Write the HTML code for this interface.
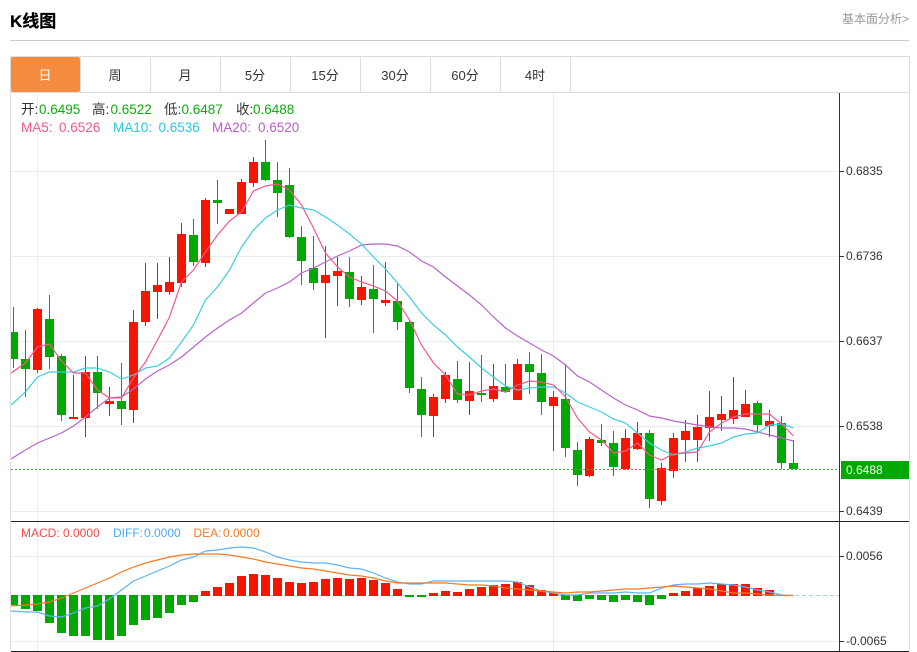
<!DOCTYPE html>
<html><head><meta charset="utf-8"><style>
html,body{margin:0;padding:0;background:#fff}
svg{display:block}
text{font-family:"Liberation Sans","Noto Sans CJK SC",sans-serif}
</style></head><body>
<svg width="917" height="652" viewBox="0 0 917 652" xmlns="http://www.w3.org/2000/svg">
<defs><clipPath id="c"><rect x="11" y="93" width="828" height="558"/></clipPath></defs>
<rect width="917" height="652" fill="#fff"/>
<text x="10" y="27" font-size="17" font-weight="bold" stroke="#000" stroke-width=".25" fill="#000">K线图</text>
<text x="842" y="23" font-size="12" fill="#999">基本面分析&gt;</text>
<path d="M10 40.5H909" stroke="#ccc" fill="none"/>
<path d="M10 56.5H909.5V651M10.5 56.5V651M10 92.5H909" stroke="#ddd" fill="none"/>
<path d="M80.5 57V92M150.5 57V92M220.5 57V92M290.5 57V92M360.5 57V92M430.5 57V92M500.5 57V92M570.5 57V92" stroke="#ddd" fill="none"/>
<path d="M13 57H78a2 2 0 0 1 2 2V90a2 2 0 0 1-2 2H13a2 2 0 0 1-2-2V59a2 2 0 0 1 2-2z" fill="#f58b3e"/>
<g font-size="13" text-anchor="middle" fill="#333">
<text x="45" y="80" fill="#fff">日</text><text x="115" y="80">周</text><text x="185" y="80">月</text><text x="255" y="80">5分</text><text x="325" y="80">15分</text><text x="395" y="80">30分</text><text x="465" y="80">60分</text><text x="535" y="80">4时</text>
</g>
<path d="M11 171.5H839M11 256.5H839M11 341.5H839M11 426.5H839M11 511.5H839M11 556.5H839M11 641.5H839M37.5 93V651M553.5 93V651" stroke="#e6edf3" fill="none"/>
<g clip-path="url(#c)">
<path d="M13.5 307V368M25.5 330V397M49.5 295V369M61.5 354V421M97.5 356V409M121.5 363V425M193.5 219V266M217.5 180V224M265.5 140V181M277.5 162V217M289.5 168V238M301.5 226V285M313.5 236V290M349.5 257V307M373.5 265V333M397.5 283V330M409.5 321V393M421.5 377V437M457.5 361V403M481.5 355V402M505.5 364V393M529.5 352V394M541.5 354V415M565.5 364V457M577.5 442V486M601.5 424V446M613.5 431V476M649.5 430V508M757.5 401V433M781.5 416V469M793.5 440V469" stroke="#0a9f0a" fill="none"/>
<path d="M37.5 308V373M73.5 375V419M85.5 356V437M109.5 387V416M133.5 310V423M145.5 263V326M157.5 263V319M169.5 257V295M181.5 223V287M205.5 198V267M241.5 179V214M253.5 157V187M325.5 246V338M337.5 257V306M361.5 276V305M385.5 262V306M433.5 394V437M445.5 372V403M469.5 362V415M493.5 364V402M517.5 359V400M553.5 391V451M589.5 437V477M625.5 429V470M637.5 422V450M661.5 463V505M673.5 433V478M685.5 420V462M697.5 415V462M709.5 391V441M721.5 396V431M733.5 377V424M745.5 390V417M769.5 410V437" stroke="#e8150a" fill="none"/>
<path d="M9 332h9v27h-9zM21 359h9v10h-9zM45 319h9v38h-9zM57 356h9v59h-9zM93 372h9v21h-9zM117 401h9v8h-9zM189 235h9v27h-9zM213 200h9v3h-9zM261 162h9v18h-9zM273 180h9v13h-9zM285 185h9v52h-9zM297 237h9v24h-9zM309 268h9v15h-9zM345 272h9v27h-9zM369 289h9v10h-9zM393 301h9v21h-9zM405 322h9v66h-9zM417 389h9v26h-9zM453 379h9v21h-9zM477 393h9v2h-9zM501 387h9v5h-9zM525 364h9v8h-9zM537 373h9v29h-9zM561 399h9v49h-9zM573 450h9v25h-9zM597 440h9v3h-9zM609 443h9v24h-9zM645 433h9v66h-9zM753 403h9v22h-9zM777 423h9v40h-9zM789 463h9v6h-9z" fill="#02a802"/>
<path d="M33 309h9v61h-9zM69 417h9v2h-9zM81 372h9v46h-9zM105 401h9v3h-9zM129 322h9v88h-9zM141 291h9v31h-9zM153 285h9v7h-9zM165 282h9v10h-9zM177 234h9v49h-9zM201 200h9v63h-9zM225 209h9v5h-9zM237 182h9v32h-9zM249 162h9v21h-9zM321 275h9v8h-9zM333 271h9v5h-9zM357 287h9v13h-9zM381 300h9v3h-9zM429 397h9v19h-9zM441 375h9v24h-9zM465 391h9v10h-9zM489 386h9v13h-9zM513 364h9v36h-9zM549 397h9v9h-9zM585 439h9v37h-9zM621 438h9v31h-9zM633 433h9v16h-9zM657 468h9v33h-9zM669 438h9v33h-9zM681 431h9v9h-9zM693 427h9v13h-9zM705 417h9v11h-9zM717 414h9v6h-9zM729 410h9v9h-9zM741 404h9v13h-9zM765 421h9v5h-9z" fill="#f51600"/>
<polyline fill="none" stroke="#b665c9" stroke-width="1.2" points="11,459 25.5,450 37.5,443 49.5,438 61.5,433 73.5,426 85.5,417 97.5,407 109.5,398 121.5,397 133.5,389 145.5,379 157.5,371 169.5,365 181.5,357 193.5,347 205.5,337 217.5,328 229.5,320 241.5,313 253.5,303 265.5,293 277.5,288 289.5,282 301.5,273 313.5,268 325.5,262 337.5,256 349.5,251 361.5,245 373.5,244 385.5,244 397.5,246 409.5,252 421.5,261 433.5,267 445.5,277 457.5,286 469.5,295 481.5,305 493.5,317 505.5,328 517.5,336 529.5,343 541.5,350 553.5,356 565.5,365 577.5,376 589.5,382 601.5,390 613.5,398 625.5,405 637.5,410 649.5,416 661.5,418 673.5,421 685.5,423 697.5,425 709.5,427 721.5,428 733.5,428 745.5,429 757.5,432 769.5,435 781.5,438 793.5,441"/>
<polyline fill="none" stroke="#3ecfe0" stroke-width="1.2" points="11,405 25.5,392 37.5,377 49.5,372 61.5,372 73.5,372 85.5,368 97.5,368 109.5,372 121.5,379 133.5,375 145.5,368 157.5,366 169.5,358 181.5,342 193.5,325 205.5,300 217.5,287 229.5,270 241.5,247 253.5,230 265.5,218 277.5,210 289.5,205 301.5,208 313.5,210 325.5,217 337.5,225 349.5,234 361.5,244 373.5,257 385.5,269 397.5,283 409.5,297 421.5,313 433.5,325 445.5,335 457.5,347 469.5,357 481.5,368 493.5,377 505.5,386 517.5,390 529.5,388 541.5,387 553.5,387 565.5,393 577.5,402 589.5,407 601.5,412 613.5,419 625.5,423 637.5,433 649.5,443 661.5,450 673.5,455 685.5,452 697.5,448 709.5,446 721.5,443 733.5,437 745.5,434 757.5,433 769.5,425 781.5,424 793.5,428"/>
<polyline fill="none" stroke="#f5588a" stroke-width="1.2" points="11,373 25.5,363 37.5,347 49.5,344 61.5,361 73.5,373 85.5,373 97.5,390 109.5,398 121.5,398 133.5,378 145.5,362 157.5,340 169.5,317 181.5,282 193.5,270 205.5,252 217.5,235 229.5,221 241.5,212 253.5,191 265.5,186 277.5,184 289.5,190 301.5,205 313.5,228 325.5,253 337.5,267 349.5,277 361.5,282 373.5,286 385.5,291 397.5,301 409.5,320 421.5,345 433.5,363 445.5,375 457.5,394 469.5,395 481.5,391 493.5,389 505.5,392 517.5,385 529.5,381 541.5,382 553.5,385 565.5,397 577.5,418 589.5,432 601.5,440 613.5,453 625.5,451 637.5,443 649.5,455 661.5,460 673.5,454 685.5,453 697.5,452 709.5,432 721.5,423 733.5,417 745.5,414 757.5,414 769.5,414 781.5,424 793.5,436"/>
<path d="M11 469.5H839" stroke="#3cb43c" stroke-dasharray="2 2" fill="none"/>
<path d="M11 595.5H839" stroke="#9fd3e8" stroke-dasharray="4 3" fill="none"/>
<path d="M9 595h9v10h-9zM21 595h9v14h-9zM33 595h9v16h-9zM45 595h9v28h-9zM57 595h9v38h-9zM69 595h9v41h-9zM81 595h9v41h-9zM93 595h9v45h-9zM105 595h9v45h-9zM117 595h9v41h-9zM129 595h9v30h-9zM141 595h9v25h-9zM153 595h9v23h-9zM165 595h9v18h-9zM177 595h9v10h-9zM189 595h9v7h-9zM405 595h9v2h-9zM417 595h9v2h-9zM561 595h9v5h-9zM573 595h9v6h-9zM585 595h9v4h-9zM597 595h9v5h-9zM609 595h9v7h-9zM621 595h9v5h-9zM633 595h9v7h-9zM645 595h9v10h-9zM657 595h9v4h-9z" fill="#02a802"/>
<path d="M201 591h9v5h-9zM213 587h9v9h-9zM225 583h9v13h-9zM237 576h9v20h-9zM249 574h9v22h-9zM261 575h9v21h-9zM273 578h9v18h-9zM285 582h9v14h-9zM297 583h9v13h-9zM309 582h9v14h-9zM321 579h9v17h-9zM333 578h9v18h-9zM345 579h9v17h-9zM357 578h9v18h-9zM369 580h9v16h-9zM381 583h9v13h-9zM393 589h9v7h-9zM429 593h9v3h-9zM441 591h9v5h-9zM453 592h9v4h-9zM465 589h9v7h-9zM477 587h9v9h-9zM489 585h9v11h-9zM501 584h9v12h-9zM513 582h9v14h-9zM525 585h9v11h-9zM537 590h9v6h-9zM549 593h9v3h-9zM669 593h9v3h-9zM681 591h9v5h-9zM693 588h9v8h-9zM705 586h9v10h-9zM717 584h9v12h-9zM729 584h9v12h-9zM741 584h9v12h-9zM753 588h9v8h-9zM765 590h9v6h-9z" fill="#f51600"/>
<polyline fill="none" stroke="#62b2f2" stroke-width="1.2" points="11,611 25.5,612 37.5,612 49.5,616 61.5,617 73.5,613 85.5,608 97.5,606 109.5,599 121.5,590 133.5,581 145.5,576 157.5,571 169.5,566 181.5,560 193.5,557 205.5,551 217.5,550 229.5,548 241.5,547 253.5,548 265.5,552 277.5,557 289.5,560 301.5,562 313.5,563 325.5,563 337.5,565 349.5,568 361.5,569 373.5,573 385.5,578 397.5,582 409.5,584 421.5,584 433.5,581 445.5,581 457.5,581 469.5,581 481.5,581 493.5,581 505.5,581 517.5,582 529.5,587 541.5,591 553.5,593 565.5,595 577.5,595 589.5,593 601.5,593 613.5,593 625.5,592 637.5,593 649.5,593 661.5,588 673.5,585 685.5,584 697.5,584 709.5,583 721.5,584 733.5,585 745.5,587 757.5,590 769.5,592 781.5,595 793.5,595.5"/>
<polyline fill="none" stroke="#f57a22" stroke-width="1.2" points="11,606 25.5,605 37.5,604 49.5,602 61.5,598 73.5,593 85.5,588 97.5,583 109.5,578 121.5,572 133.5,567 145.5,563 157.5,560 169.5,557 181.5,555 193.5,554 205.5,554 217.5,554 229.5,555 241.5,557 253.5,559 265.5,562 277.5,564 289.5,566 301.5,568 313.5,569 325.5,571 337.5,573 349.5,575 361.5,576 373.5,578 385.5,581 397.5,583 409.5,583 421.5,583 433.5,583 445.5,583 457.5,584 469.5,585 481.5,585 493.5,586 505.5,588 517.5,589 529.5,590 541.5,591 553.5,592 565.5,593 577.5,592 589.5,592 601.5,591 613.5,590 625.5,589 637.5,589 649.5,588 661.5,587 673.5,586 685.5,587 697.5,588 709.5,589 721.5,591 733.5,593 745.5,593 757.5,594 769.5,595 781.5,595.5 793.5,595.5"/>
</g>
<path d="M11 521.5H909M11 651.5H909" stroke="#222" fill="none"/>
<path d="M839.5 93V651.5" stroke="#333" fill="none"/>
<path d="M840 171.5h4M840 256.5h4M840 341.5h4M840 426.5h4M840 511.5h4M840 556.5h4M840 641.5h4" stroke="#333" fill="none"/>
<rect x="841" y="461" width="68" height="18" fill="#00a800"/>
<g font-size="12" fill="#333">
<text x="846" y="175">0.6835</text><text x="846" y="260">0.6736</text><text x="846" y="345">0.6637</text><text x="846" y="430">0.6538</text><text x="846" y="515">0.6439</text><text x="846" y="560">0.0056</text><text x="846" y="645">-0.0065</text>
<text x="846" y="474" fill="#fff">0.6488</text>
</g>
<g font-size="13.5" fill="#333">
<text x="21" y="114">开:</text><text x="92" y="114">高:</text><text x="164" y="114">低:</text><text x="236" y="114">收:</text>
</g>
<g font-size="13.5" fill="#0eab0e">
<text x="39" y="114">0.6495</text><text x="110.5" y="114">0.6522</text><text x="181.5" y="114">0.6487</text><text x="253" y="114">0.6488</text>
</g>
<g font-size="13.5">
<text x="21" y="132" fill="#f5588a">MA5:</text><text x="59" y="132" fill="#f5588a">0.6526</text>
<text x="113" y="132" fill="#2ac9df">MA10:</text><text x="158.5" y="132" fill="#2ac9df">0.6536</text>
<text x="212" y="132" fill="#b95fc8">MA20:</text><text x="258" y="132" fill="#b95fc8">0.6520</text>
</g>
<g font-size="12">
<text x="21" y="537" fill="#fa4a4a">MACD:</text><text x="63" y="537" fill="#fa4a4a">0.0000</text>
<text x="113" y="537" fill="#4fa8f2">DIFF:</text><text x="144" y="537" fill="#4fa8f2">0.0000</text>
<text x="193.5" y="537" fill="#f57a22">DEA:</text><text x="223" y="537" fill="#f57a22">0.0000</text>
</g>
</svg>
</body></html>
